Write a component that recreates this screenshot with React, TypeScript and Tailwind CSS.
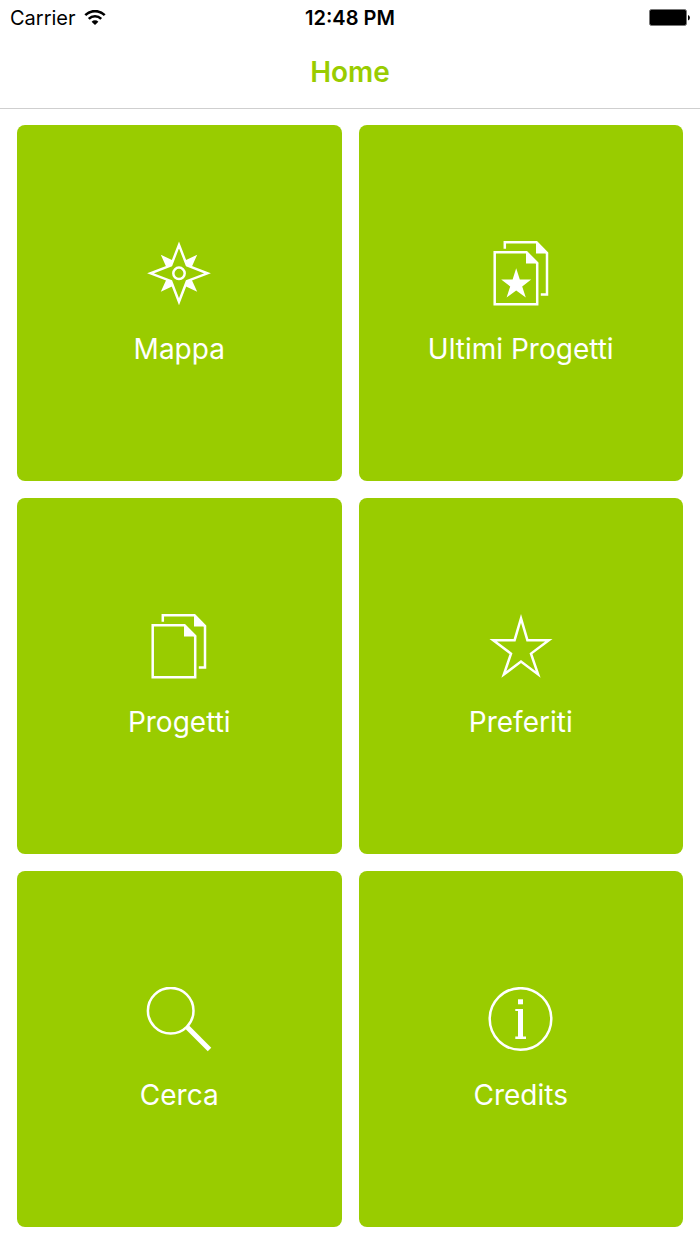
import React from "react";

const strokeProps = {
  fill: "none",
  stroke: "currentColor",
  strokeWidth: 2.5,
  strokeMiterlimit: 10,
};

function Icon({ children }: { children: React.ReactNode }) {
  return (
    <svg viewBox="-1 0 66 66" className="size-[66px]" aria-hidden="true">
      {children}
    </svg>
  );
}

function CompassIcon() {
  return (
    <Icon>
      <path
        d="M13.8 13.8 26 19.6 24 24.3 19.4 26.2ZM50.2 13.8 38 19.6 40 24.3 44.6 26.2ZM13.8 50.8 26 45 24 40.3 19.4 38.4ZM50.2 50.8 38 45 40 40.3 44.6 38.4Z"
        fill="currentColor"
      />
      <path
        {...strokeProps}
        d="M32 3.9 39.9 24.4 60.4 32.3 39.9 40.2 32 60.7 24.1 40.2 3.6 32.3 24.1 24.4Z"
      />
      <circle {...strokeProps} cx="32" cy="32.3" r="5.7" />
    </Icon>
  );
}

function PagesIcon({ starred = false }: { starred?: boolean }) {
  return (
    <Icon>
      <path {...strokeProps} d="M5.7 11.3H37.5L48.2 22V63.3H5.7Z" />
      <path {...strokeProps} d="M15.8 7.7V1.3H47.5L58 12V53.5H51.8" />
      <path d="M37 10 49.5 22.6H37ZM47 0 59.3 12.6H47Z" fill="currentColor" />
      {starred && (
        <path
          d="M27.2 27.3 30.8 38.6H42.2L33.2 45.4 36.8 56.4 27.2 49.6 17.6 56.4 21.2 45.4 12.2 38.6H23.6Z"
          fill="currentColor"
        />
      )}
    </Icon>
  );
}

function StarIcon() {
  return (
    <Icon>
      <path
        {...strokeProps}
        d="M32 4.4 38.4 26.2H59.8L42 39.6 49.1 60.4 32 47.6 14.9 60.4 22 39.6 4.2 26.2H25.6Z"
      />
    </Icon>
  );
}

function SearchIcon() {
  return (
    <Icon>
      <circle {...strokeProps} cx="23.7" cy="23.7" r="22.8" />
      <path {...strokeProps} strokeWidth={5} d="M40.3 40.3 62.5 62.5" />
    </Icon>
  );
}

function InfoIcon() {
  return (
    <Icon>
      <circle {...strokeProps} cx="31.5" cy="32" r="30.8" />
      <rect x="29" y="12.3" width="5" height="5" fill="currentColor" />
      <path d="M26.3 22H34V49.5H37V52H26.3V49.5H29V24H26.3Z" fill="currentColor" />
    </Icon>
  );
}

const tiles = [
  { label: "Mappa", href: "#mappa", icon: <CompassIcon /> },
  { label: "Ultimi Progetti", href: "#ultimi-progetti", icon: <PagesIcon starred /> },
  { label: "Progetti", href: "#progetti", icon: <PagesIcon /> },
  { label: "Preferiti", href: "#preferiti", icon: <StarIcon /> },
  { label: "Cerca", href: "#cerca", icon: <SearchIcon /> },
  { label: "Credits", href: "#credits", icon: <InfoIcon /> },
];

function StatusBar() {
  return (
    <div className="grid h-9 grid-cols-3 items-center px-[10px] text-xl text-black">
      <div className="flex items-center gap-2">
        <span>Carrier</span>
        <svg viewBox="0 0 22 16" className="h-4 w-[22px]" role="img" aria-label="Wi-Fi">
          <g fill="none" stroke="currentColor" strokeWidth="2.6">
            <path d="M1.3 5.1a13.8 13.8 0 0 1 19.4 0" />
            <path d="M4.8 8.8a8.8 8.8 0 0 1 12.4 0" />
          </g>
          <path d="M7.6 11.7a4.9 4.9 0 0 1 6.8 0L11 15.1Z" fill="currentColor" />
        </svg>
      </div>
      <span className="text-center font-semibold">12:48 PM</span>
      <svg
        viewBox="-1 0 42 18"
        className="h-[18px] w-[42px] justify-self-end"
        role="img"
        aria-label="Battery"
      >
        <rect x="0.5" y="0.5" width="37" height="16" rx="2" fill="#000" stroke="#777" />
        <path d="M39 6a3 3 0 0 1 0 5.6Z" fill="#000" />
      </svg>
    </div>
  );
}

export default function App() {
  return (
    <div className="flex min-h-screen flex-col bg-white font-['Inter',sans-serif]">
      <header className="border-b border-[#cfcfcf]">
        <StatusBar />
        <h1 className="flex h-[72px] items-center justify-center text-[28px] font-semibold text-[#99cc00]">
          Home
        </h1>
      </header>

      {/* Home menu */}
      <nav className="grid flex-1 auto-rows-fr grid-cols-2 gap-[17px] px-[17px] pt-4 pb-[17px]">
        {tiles.map((tile) => (
          <a
            key={tile.label}
            href={tile.href}
            className="flex flex-col items-center justify-center gap-6 rounded-lg bg-[#99cc00] pt-0.5 text-white"
          >
            {tile.icon}
            <span className="text-[28px] leading-9">{tile.label}</span>
          </a>
        ))}
      </nav>
    </div>
  );
}
